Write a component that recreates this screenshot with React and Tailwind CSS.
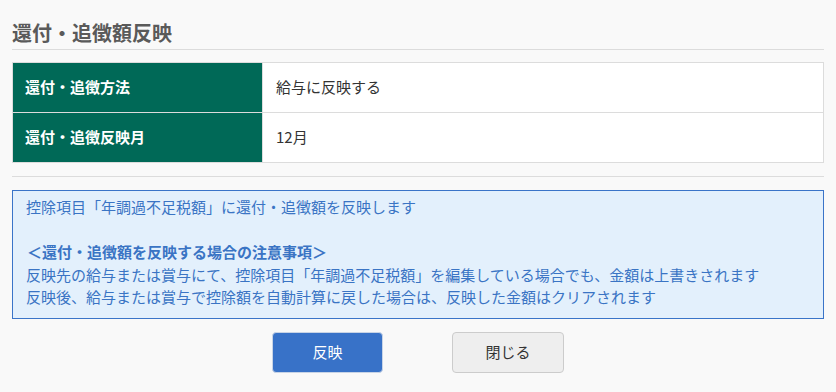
export default function App() {
  const font = { fontFamily: '"Noto Sans CJK JP", "Noto Sans", sans-serif' };
  return (
    <div className="w-[836px] h-[392px] bg-[#f9f9f9] px-[12px] overflow-hidden" style={font}>
      <div className="pt-[20px] pb-[3px] border-b border-[#dcdcdc]">
        <h1 className="text-[20px] leading-[26px] font-bold text-[#5a5a5a]">還付・追徴額反映</h1>
      </div>

      <table className="mt-[12px] w-full border-collapse text-[15px]">
        <tbody>
          <tr className="h-[50px]">
            <th className="w-[250px] bg-[#006957] text-white font-bold text-left pl-[12px] border border-[#dcdcdc]">還付・追徴方法</th>
            <td className="bg-white text-[#333] pl-[13px] border border-[#dcdcdc]">給与に反映する</td>
          </tr>
          <tr className="h-[50px]">
            <th className="w-[250px] bg-[#006957] text-white font-bold text-left pl-[12px] border border-[#dcdcdc]">還付・追徴反映月</th>
            <td className="bg-white text-[#333] pl-[13px] border border-[#dcdcdc]">12月</td>
          </tr>
        </tbody>
      </table>

      <div className="mt-[13px] border-t border-[#dcdcdc]" />

      <div className="mt-[13px] h-[129px] border border-[#3a74c8] bg-[#e3f0fc] pl-[13px] pt-[5px] text-[15px] leading-[22.5px] text-[#3a74c4]">
        <p>控除項目「年調過不足税額」に還付・追徴額を反映します</p>
        <p>&nbsp;</p>
        <p className="font-bold pl-[1px]">＜還付・追徴額を反映する場合の注意事項＞</p>
        <p>反映先の給与または賞与にて、控除項目「年調過不足税額」を編集している場合でも、金額は上書きされます</p>
        <p>反映後、給与または賞与で控除額を自動計算に戻した場合は、反映した金額はクリアされます</p>
      </div>

      <div className="mt-[13px] flex justify-center gap-[69px]">
        <button className="w-[111px] h-[41px] rounded-[4px] bg-[#3872c8] border border-[#c8d4e6] text-white text-[15px]">反映</button>
        <button className="w-[112px] h-[41px] rounded-[4px] bg-[#eeeeee] border border-[#cccccc] text-[#333] text-[15px]">閉じる</button>
      </div>
    </div>
  );
}
